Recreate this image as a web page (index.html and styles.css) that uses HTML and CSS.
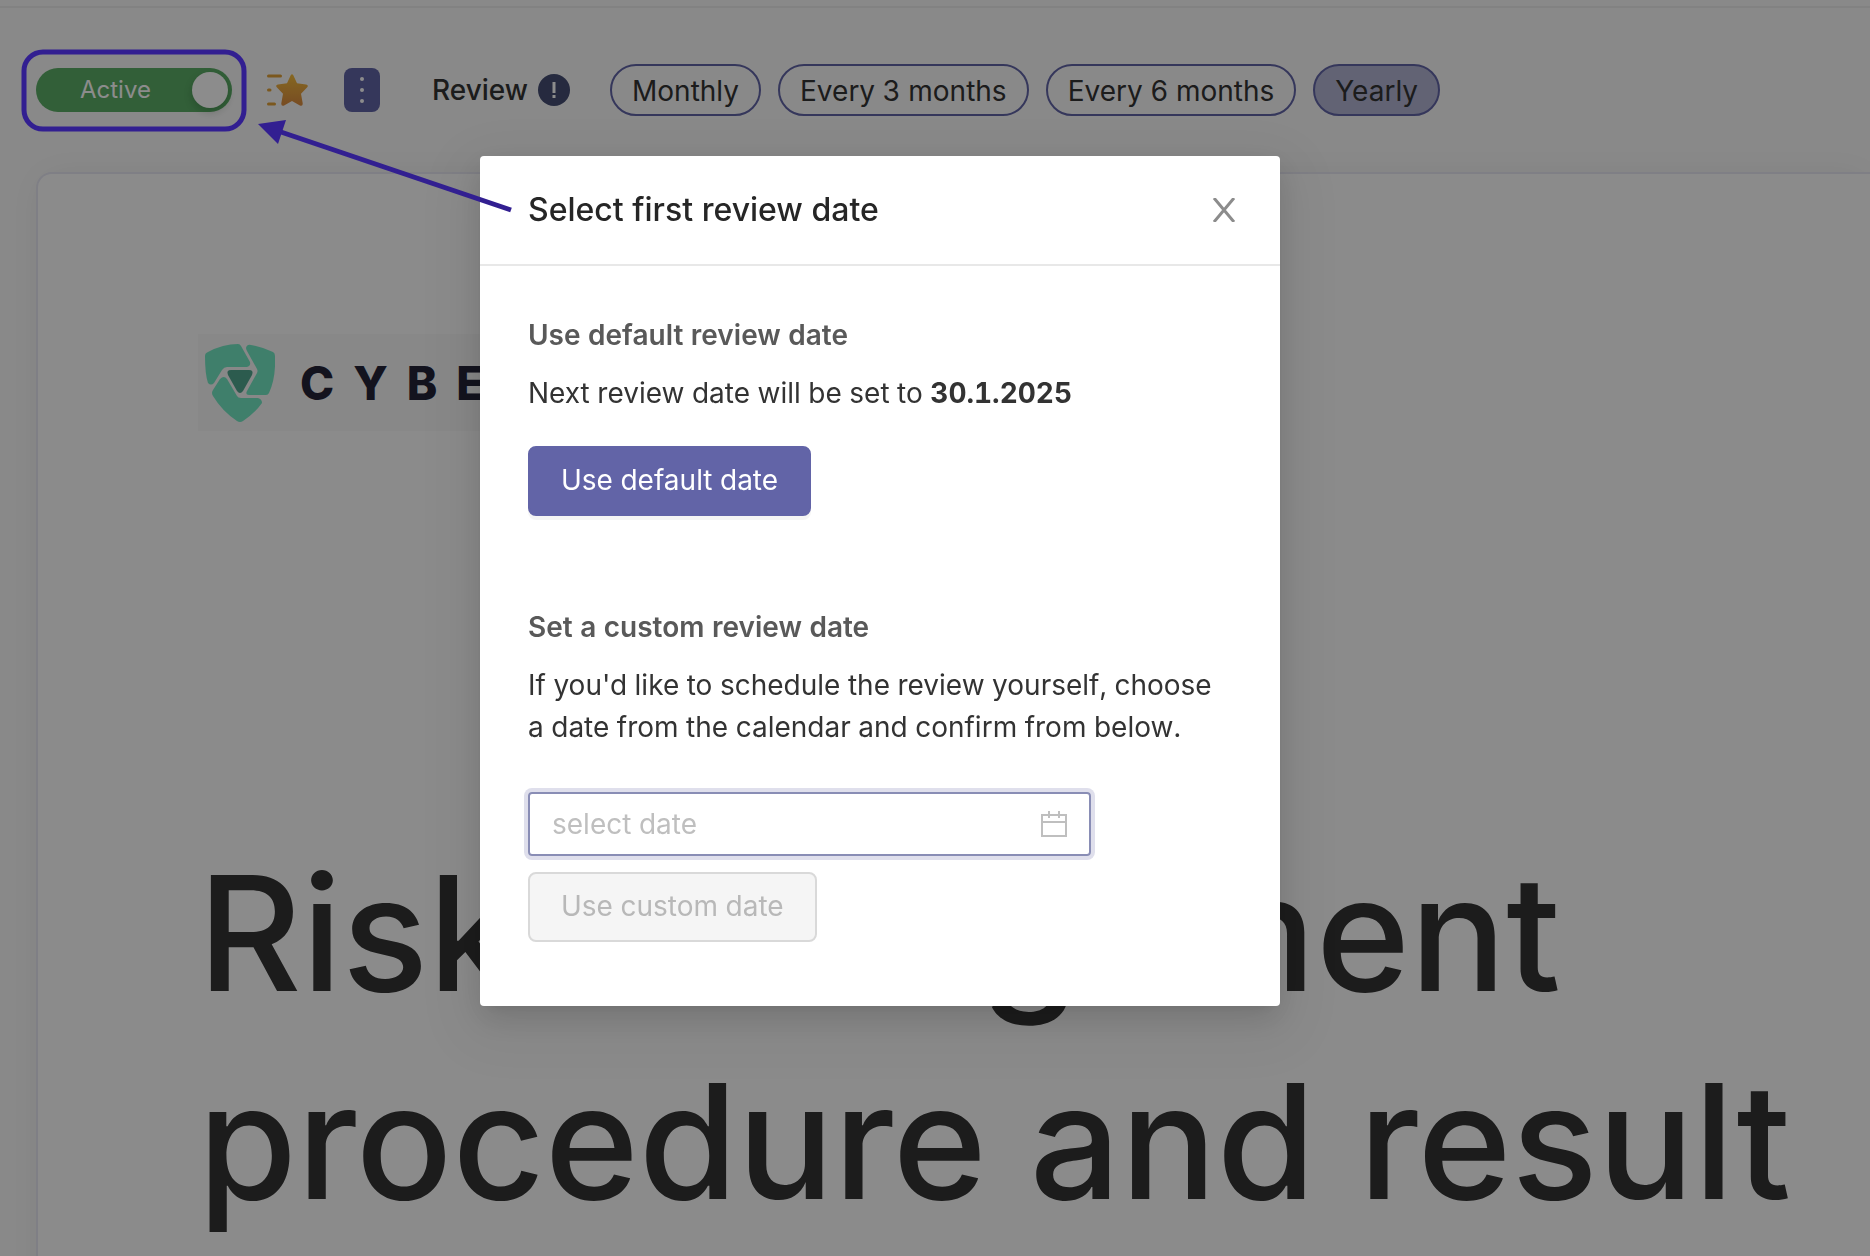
FILE: index.html
```
<!DOCTYPE html>
<html lang="en">
<head>
    <meta charset="UTF-8">
    <meta name="viewport" content="width=device-width, initial-scale=1.0">
    <title>Risk management procedure and result</title>
    <link rel="stylesheet" href="styles.css">
</head>
<body>
    <div class="page">
        <div class="toolbar">
            <label class="switch">
                <input type="checkbox" checked>
                <span class="switch-text">Active</span>
                <span class="switch-knob"></span>
            </label>
            <svg class="star" viewBox="0 0 42 34" width="42" height="34" aria-hidden="true">
                <defs>
                    <linearGradient id="gold" x1="0" y1="0" x2="0" y2="1">
                        <stop offset="0" stop-color="#f4bd3c"/>
                        <stop offset="1" stop-color="#d98a40"/>
                    </linearGradient>
                </defs>
                <path d="M2.500 3h12M2.500 17h1.500M2.500 31h6" fill="none" stroke="#e0a038" stroke-width="3" stroke-linecap="round"/>
                <path d="M24.700 2.300Q26 0 27.300 2.300L31 10.300L40 11.600Q43 12.300 41 14.500L35 20.800L36.700 30.300Q36.900 33.700 33.900 32.500L26 28L18.100 32.500Q15.100 33.700 15.300 30.300L17 20.800L11 14.500Q9 12.300 12 11.600L21 10.300Z" fill="url(#gold)"/>
            </svg>
            <button class="more" type="button" aria-label="More">
                <svg viewBox="0 0 4 28" width="4" height="28"><circle cx="2" cy="3" r="2"/><circle cx="2" cy="14" r="2"/><circle cx="2" cy="25" r="2"/></svg>
            </button>
            <span class="review">Review
                <svg viewBox="0 0 32 32" width="32" height="32" aria-hidden="true">
                    <circle cx="16" cy="16" r="16" fill="#454e73"/>
                    <path d="M16 8v11M16 21v3" stroke="#fff" stroke-width="3"/>
                </svg>
            </span>
            <div class="chips">
                <button class="chip" type="button">Monthly</button>
                <button class="chip" type="button">Every 3 months</button>
                <button class="chip" type="button">Every 6 months</button>
                <button class="chip selected" type="button">Yearly</button>
            </div>
        </div>

        <div class="document">
            <div class="logo">
                <svg viewBox="0 0 70 78" width="70" height="78" aria-hidden="true">
                    <g fill="#73e7c3">
                        <path d="M0 12Q0 9 3 8Q18 0 33 0Q35 0 36 2L45 18Q46 22 42 23L22 23Q19 23 17 26L9 39Q6 42 3 39Q0 30 0 12Z"/>
                        <path d="M41 4Q42 0 46 1Q57 3 68 8Q70 9 70 12Q71 34 64 49Q63 51 61 51L44 51Q40 51 42 47L52 29Q53 27 52 25L42 7Q41 5 41 4Z"/>
                        <path d="M15 35Q19 31 22 35L32 52Q33 54 36 54L53 54Q57 55 57 59Q50 69 38 77Q35 79 32 77Q17 67 8 52Q6 49 8 46Z"/>
                    </g>
                    <path d="M26 26L44 26Q49 26 47 31L38 47Q35 51 32 47L23 31Q21 26 26 26Z" fill="#50a78f"/>
                </svg>
                <span class="logo-text">CYBERDAY</span>
            </div>
            <h1>Risk management procedure and result</h1>
        </div>
    </div>

    <div class="mask"></div>

    <div class="modal" role="dialog" aria-labelledby="modal-title">
        <div class="modal-header">
            <h2 id="modal-title">Select first review date</h2>
            <button class="close" type="button" aria-label="Close">
                <svg viewBox="0 0 24 24" width="24" height="24"><path d="M2 0L22 24M22 0L2 24" fill="none" stroke="#8c8c8c" stroke-width="3"/></svg>
            </button>
        </div>
        <div class="modal-body">
            <section>
                <h3>Use default review date</h3>
                <p>Next review date will be set to <b>30.1.2025</b></p>
                <button class="btn primary" type="button">Use default date</button>
            </section>
            <section>
                <h3>Set a custom review date</h3>
                <p>If you'd like to schedule the review yourself, choose a date from the calendar and confirm from below.</p>
                <div class="picker">
                    <input type="text" placeholder="select date" aria-label="Review date">
                    <svg viewBox="0 0 26 26" width="26" height="26" aria-hidden="true">
                        <path d="M1 4h24v21H1zM1 11h24M8 0v7M18 0v7" fill="none" stroke="#bfbfbf" stroke-width="2"/>
                    </svg>
                </div>
                <button class="btn" type="button" disabled>Use custom date</button>
            </section>
        </div>
    </div>

    <!-- highlight around the switch, arrow from the dialog -->
    <svg class="callout" viewBox="0 0 520 220" width="520" height="220" aria-hidden="true">
        <rect x="24" y="52" width="220" height="77" rx="19" fill="none" stroke="#321f91" stroke-width="5"/>
        <path d="M278 131L511 210" stroke="#321f91" stroke-width="5"/>
        <path d="M258 124L286 120L278 144Z" fill="#321f91"/>
    </svg>
</body>
</html>
```

FILE: styles.css
```
* {
    box-sizing: border-box;
}

body {
    margin: 0;
    font-family: Inter, sans-serif;
    font-size: 28px;
    font-variant-numeric: tabular-nums;
    line-height: 42px;
    color: #333;
    background-color: #fafafa;
    overflow: hidden;
}

button,
input {
    font: inherit;
    color: inherit;
}

h1,
h2,
h3,
p {
    margin: 0;
}

.page {
    height: 100vh;
    overflow: hidden;
    padding-top: 6px;
}

.toolbar {
    display: flex;
    align-items: center;
    height: 166px;
    padding: 0 36px;
    border-top: 2px solid #ededed;
}

.switch {
    display: flex;
    align-items: center;
    justify-content: space-between;
    width: 196px;
    height: 44px;
    padding: 0 4px 0 44px;
    border-radius: 22px;
    background-color: #5bad66;
    color: #fff;
    font-size: 24px;
}

.switch input {
    position: absolute;
    opacity: 0;
}

.switch-knob {
    width: 36px;
    height: 36px;
    border-radius: 50%;
    background-color: #fff;
    box-shadow: 0 4px 8px rgba(0, 35, 11, 0.2);
}

.star {
    margin-left: 34px;
}

.more {
    display: flex;
    align-items: center;
    justify-content: center;
    width: 36px;
    height: 44px;
    margin-left: 36px;
    padding: 0;
    border: 0;
    border-radius: 8px;
    background-color: #6264a7;
}

.more svg {
    fill: #fff;
}

.review {
    display: flex;
    align-items: center;
    gap: 10px;
    margin-left: 52px;
    font-weight: 500;
}

.chips {
    display: flex;
    gap: 17px;
    margin-left: 40px;
}

.chip {
    height: 52px;
    padding: 2px 20px 0;
    border: 2px solid #6264a7;
    border-radius: 26px;
    background: none;
}

.chip.selected {
    background-color: #b2b5d3;
}

.document {
    min-height: 100vh;
    margin-left: 36px;
    padding: 160px 0 0 160px;
    border: 2px solid #e7e7f3;
    border-right: 0;
    border-radius: 16px 0 0 0;
    background-color: #fefefe;
    box-shadow: 0 0 40px rgba(0, 0, 0, 0.05);
}

.logo {
    display: flex;
    align-items: center;
    gap: 25px;
    width: 600px;
    height: 97px;
    padding-left: 7px;
    background-color: #f7f7f7;
    color: #242338;
}

.logo-text {
    font-size: 46px;
    font-weight: 800;
    letter-spacing: 19px;
}

h1 {
    margin-top: 398px;
    font-size: 160px;
    font-weight: 500;
    line-height: 208px;
}

.mask {
    position: fixed;
    inset: 0;
    background-color: rgba(0, 0, 0, 0.45);
}

.modal {
    position: absolute;
    top: 156px;
    left: 480px;
    width: 800px;
    border-radius: 4px;
    background-color: #fff;
    box-shadow: 0 6px 12px -8px rgba(0, 0, 0, 0.12), 0 12px 32px rgba(0, 0, 0, 0.12), 0 18px 56px 16px rgba(0, 0, 0, 0.05);
}

.modal-header {
    display: flex;
    align-items: center;
    justify-content: space-between;
    height: 110px;
    padding: 0 44px 0 48px;
    border-bottom: 2px solid #e8e8e8;
}

h2 {
    font-size: 32px;
    font-weight: 500;
    color: #262626;
}

.close {
    display: flex;
    padding: 0;
    border: 0;
    background: none;
}

.modal-body {
    display: flex;
    flex-direction: column;
    gap: 90px;
    padding: 48px 48px 64px;
}

h3 {
    margin-bottom: 16px;
    font-size: 28px;
    font-weight: 600;
    color: #595959;
}

p {
    margin-bottom: 32px;
}

b {
    font-weight: 700;
}

.btn {
    display: block;
    height: 70px;
    padding: 0 31px 2px;
    border: 2px solid #d9d9d9;
    border-radius: 8px;
    background-color: #f5f5f5;
    color: #b8b8b8;
}

.btn.primary {
    border-color: #6264a7;
    background-color: #6264a7;
    color: #fff;
    box-shadow: 0 4px 0 rgba(0, 0, 0, 0.04);
}

.picker {
    display: flex;
    align-items: center;
    width: 80%;
    height: 64px;
    margin: 44px 0 16px;
    padding: 0 22px;
    border: 2px solid #898db5;
    border-radius: 4px;
    box-shadow: 0 0 0 4px #dfdfec;
}

.picker input {
    flex: 1;
    min-width: 0;
    padding: 0;
    border: 0;
    outline: 0;
    background: none;
}

.picker input::placeholder {
    color: #bfbfbf;
}

.callout {
    position: absolute;
    top: 0;
    left: 0;
    pointer-events: none;
}
```
